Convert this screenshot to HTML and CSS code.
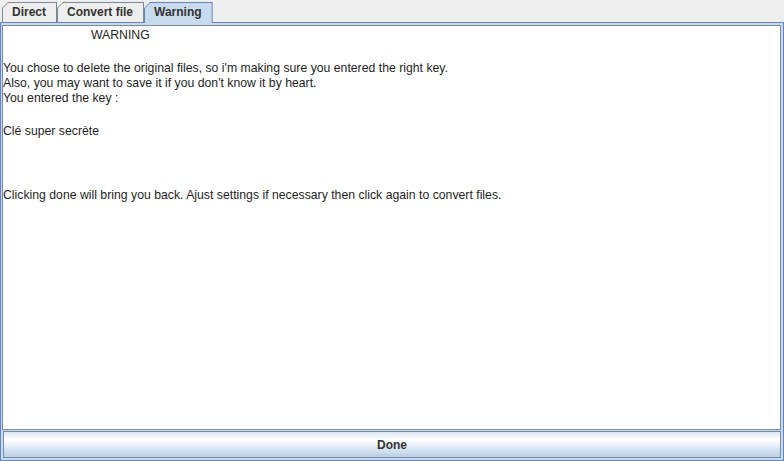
FILE: index.html
```html
<!DOCTYPE html>
<html lang="en">
<head>
    <meta charset="UTF-8">
    <title>Warning</title>
    <link rel="stylesheet" href="styles.css">
</head>
<body>
    <div class="window">
        <div class="tabs">
            <div class="tab"><div class="tab-inner">Direct</div></div>
            <div class="tab"><div class="tab-inner">Convert file</div></div>
            <div class="tab selected"><div class="tab-inner">Warning</div></div>
        </div>

        <div class="pane">
            <div class="text-area">
                <div class="title">WARNING</div>
                <div class="message">
                    <div>You chose to delete the original files, so i'm making sure you entered the right key.</div>
                    <div>Also, you may want to save it if you don't know it by heart.</div>
                    <div>You entered the key :</div>
                </div>
                <div class="key">Clé super secrète</div>
                <div class="note">Clicking done will bring you back. Ajust settings if necessary then click again to convert files.</div>
            </div>
            <button class="done-btn">Done</button>
        </div>
    </div>
</body>
</html>
```

FILE: styles.css
```css
* {
    margin: 0;
    padding: 0;
    box-sizing: border-box;
}

body {
    font-family: 'Liberation Sans', Arial, sans-serif;
    font-size: 12px;
    background: #eeeeee;
    color: #222222;
}

.window {
    width: 784px;
    height: 461px;
    display: flex;
    flex-direction: column;
}

.tabs {
    display: flex;
    height: 22px;
    padding: 2px 0 0 2px;
}

/* outer shape draws the border, inner shape the fill */
.tab {
    background: #7a8a99;
    clip-path: polygon(6px 0, 100% 0, 100% 100%, 0 100%, 0 6px);
    padding: 1px 1px 0 1px;
}

.tab-inner {
    height: 19px;
    line-height: 19px;
    padding: 0 10px 0 9px;
    font-weight: bold;
    color: #333333;
    background: #eeeeee;
    clip-path: polygon(5px 0, 100% 0, 100% 100%, 0 100%, 0 5px);
}

.tab.selected {
    background: #6382bf;
    position: relative;
    z-index: 1;
    height: 21px;
}

.tab.selected .tab-inner {
    background: #c8dbee;
    height: 21px;
}

.pane {
    flex: 1;
    border: 1px solid #6382bf;
    background: #c8dbee;
    padding: 2px;
    display: flex;
    flex-direction: column;
    gap: 1px;
}

.text-area {
    flex: 1;
    background: #ffffff;
    border: 1px solid #7a8a99;
    color: #1e1e1e;
    font-size: 12.25px;
    line-height: 15px;
    padding: 2px 0 0 0;
    margin-left: -1px;
}

.title {
    padding-left: 88px;
}

.message {
    margin-top: 18px;
}

.key {
    margin-top: 18px;
}

.note {
    margin-top: 49px;
}

.done-btn {
    height: 27px;
    border: 1px solid #7a8a99;
    background: linear-gradient(to bottom, #dde8f3 0%, #ffffff 30%, #b8cfe5 100%);
    font-family: 'Liberation Sans', Arial, sans-serif;
    font-size: 12px;
    font-weight: bold;
    color: #333333;
    cursor: pointer;
}
```
